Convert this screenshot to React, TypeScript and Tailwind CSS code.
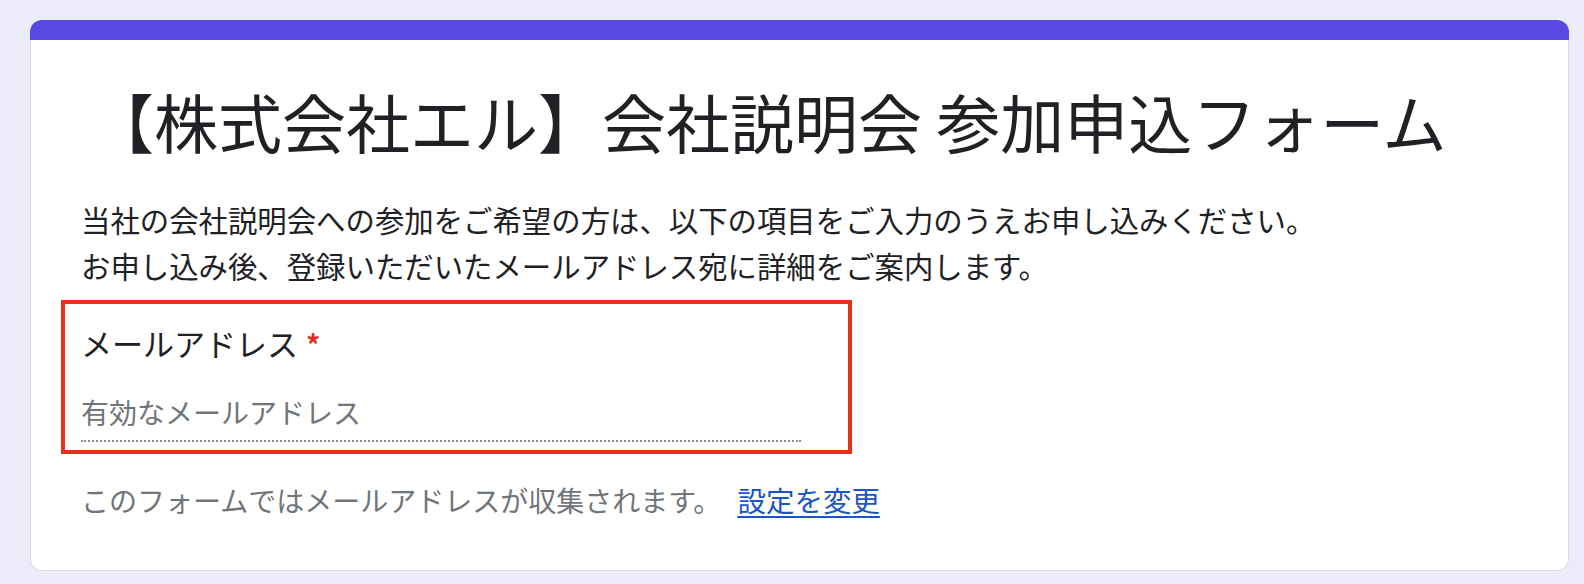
import React from "react";

const font = { fontFamily: '"Noto Sans CJK JP", "Noto Sans", sans-serif' };

const App = () => {
  return (
    <div className="min-h-screen w-full bg-[#ecebf9] pt-[20px] pl-[30px] pr-[15px]" style={font}>
      <div className="rounded-t-[12px] bg-[#5a48e2] h-[20px]" />
      <div className="bg-white rounded-b-[12px] border border-t-0 border-[#dadce0] pl-[50px] pr-[40px] pt-[40px] pb-[50px]">
        <h1 className="text-[64px] leading-[80px] text-[#202124] font-normal pl-[9px] whitespace-nowrap">
          【株式会社エル】会社説明会 参加申込フォーム
        </h1>
        <p className="mt-[36px] text-[29.4px] leading-[46px] text-[#202124]">
          当社の会社説明会への参加をご希望の方は、以下の項目をご入力のうえお申し込みください。
          <br />
          お申し込み後、登録いただいたメールアドレス宛に詳細をご案内します。
        </p>
        <div className="mt-[12px] -ml-[20px] w-[791px] border-4 border-[#e8301c] pl-[16px] pt-[19px] pb-[8px]">
          <div className="text-[31px] leading-[40px] text-[#202124] flex items-baseline">
            <span>メールアドレス</span>
            <span className="text-[#d93025] text-[28px] font-bold ml-[8px]">*</span>
          </div>
          <div className="mt-[28px] w-[720px] border-b-2 border-dotted border-[#8a8f95] pb-[8px] text-[28px] leading-[40px] text-[#70757a]">
            有効なメールアドレス
          </div>
        </div>
        <div className="mt-[26px] text-[28px] leading-[40px] text-[#70757a] flex">
          <span>このフォームではメールアドレスが収集されます。</span>
          <a href="#" className="ml-[16px] text-[28.5px] text-[#1a56c4] underline underline-offset-4">
            設定を変更
          </a>
        </div>
      </div>
    </div>
  );
};

export default App;
